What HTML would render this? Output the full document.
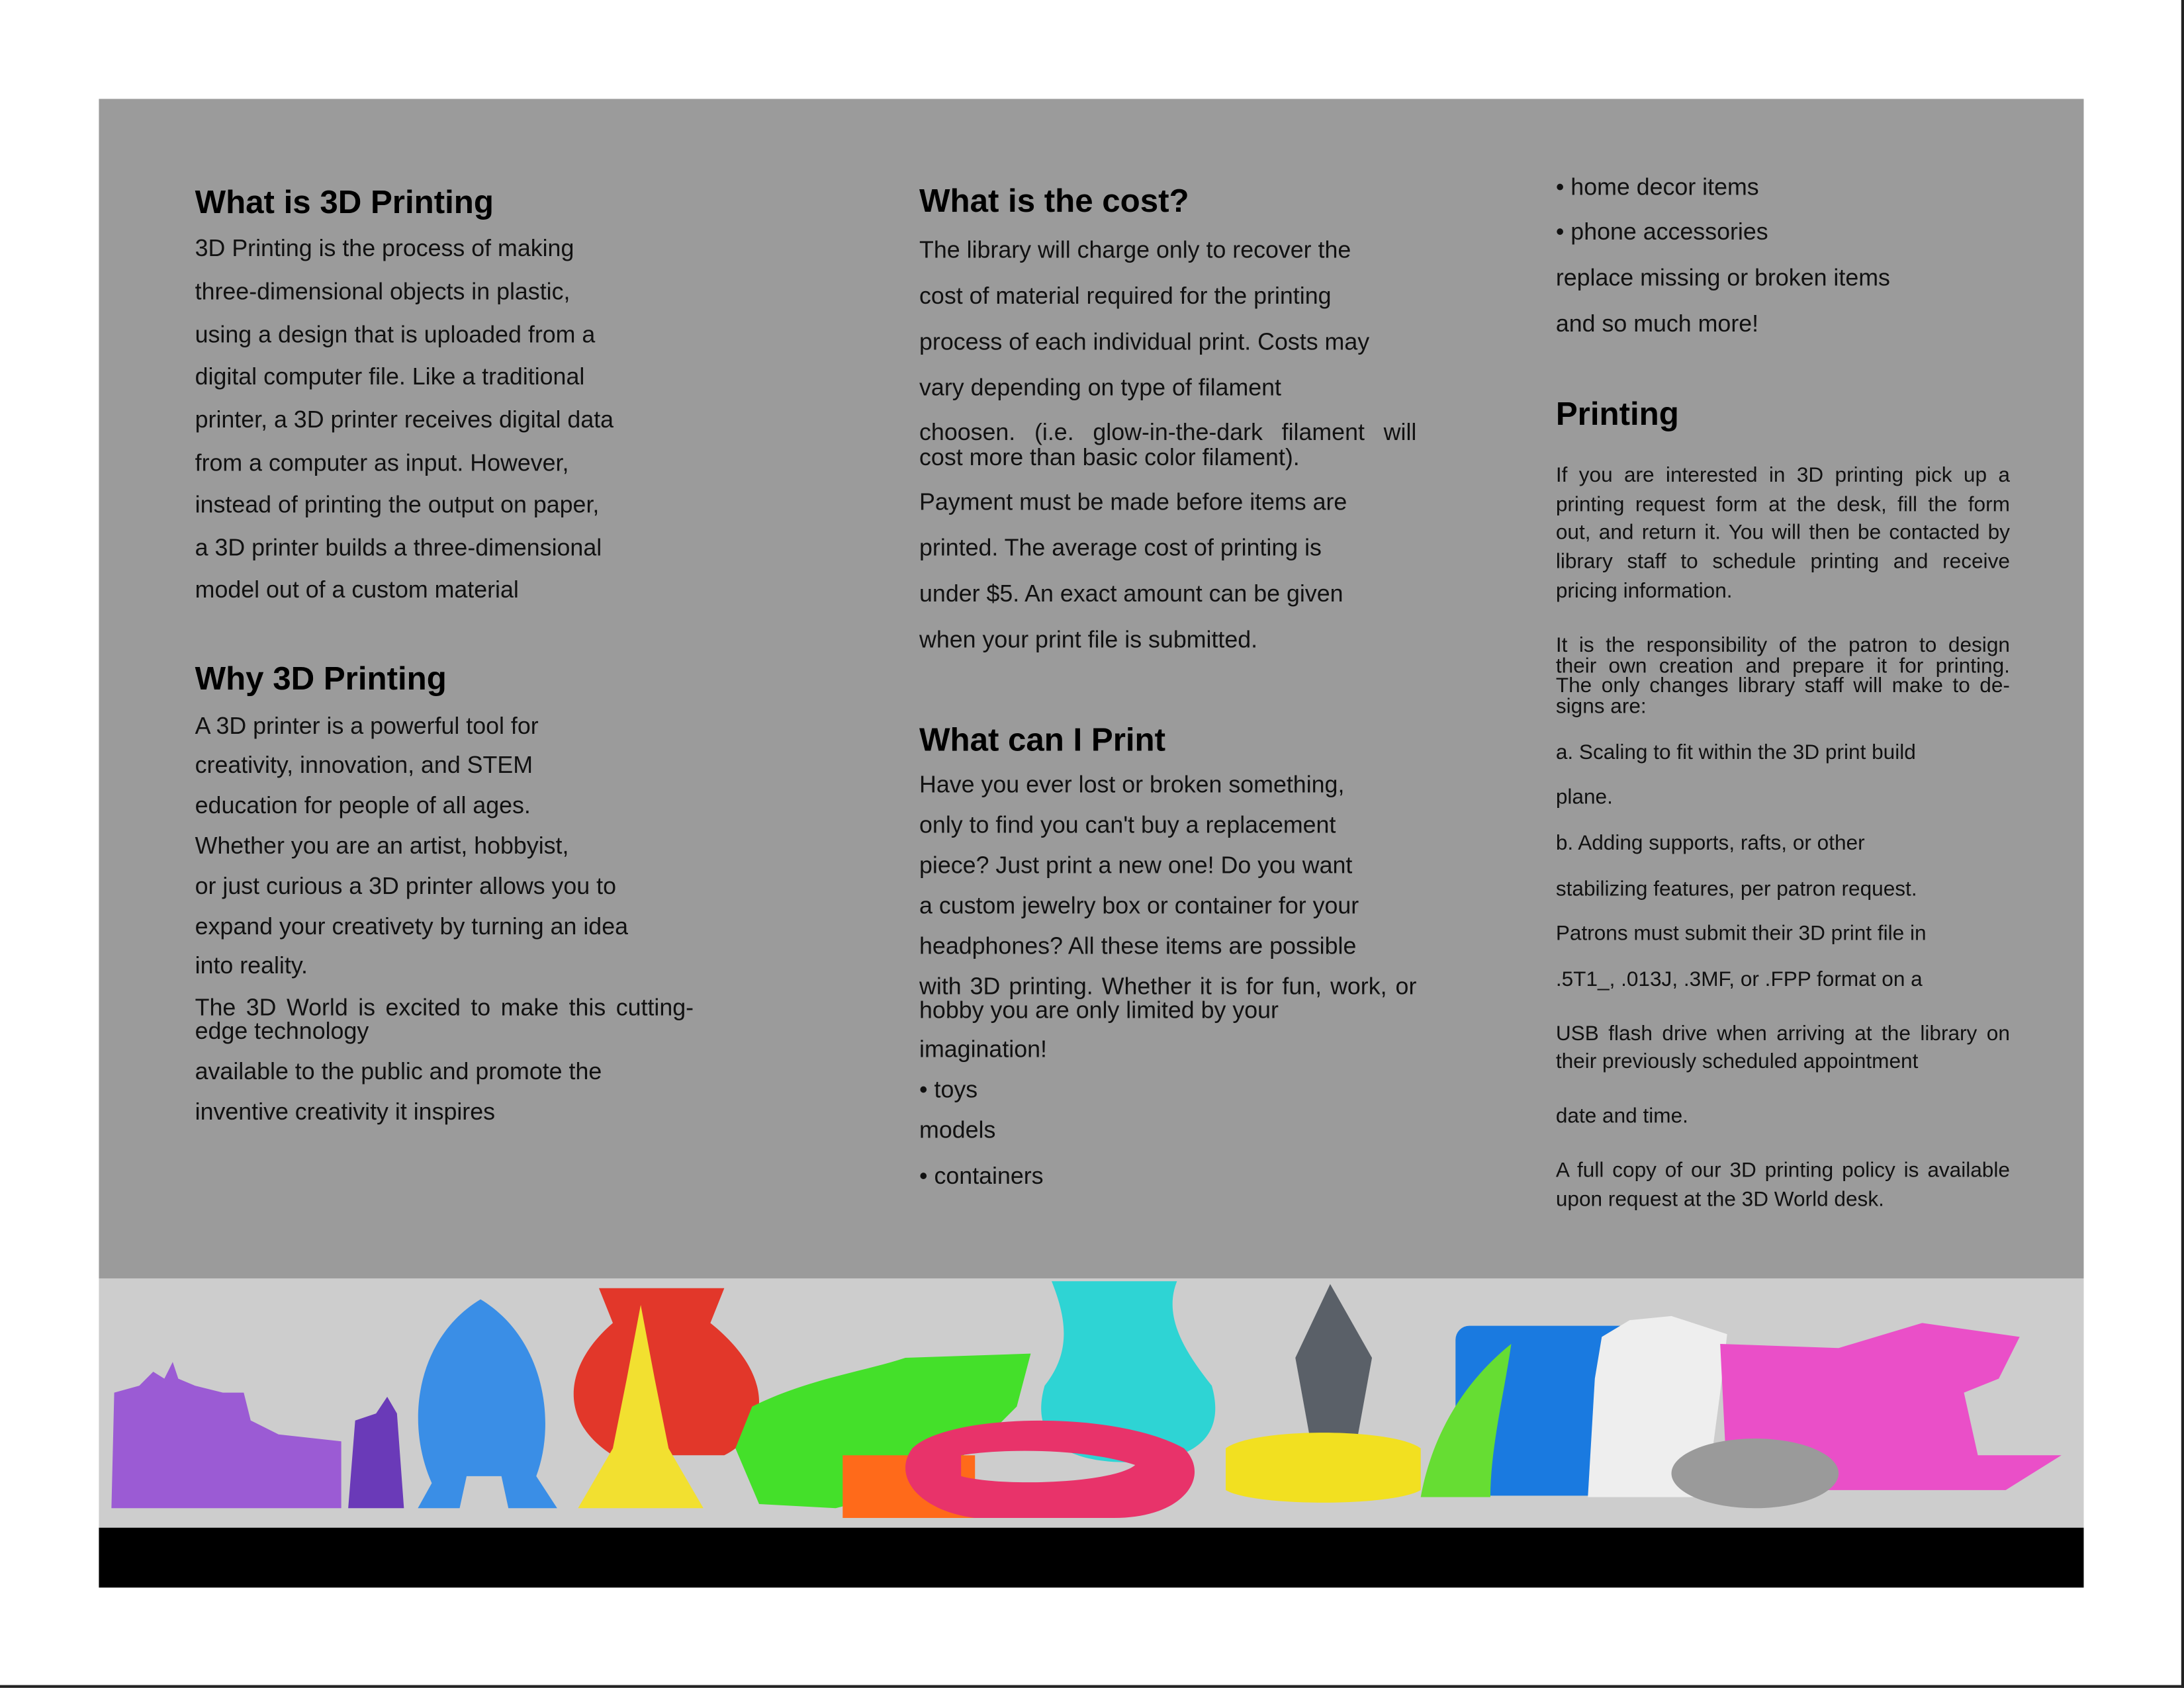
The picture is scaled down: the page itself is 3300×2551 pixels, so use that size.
<!DOCTYPE html>
<html><head><meta charset="utf-8"><style>
html,body{margin:0;padding:0;background:#fff;}
body{width:3300px;height:2550px;overflow:hidden;position:relative;}
#s{position:absolute;left:0;top:0;width:1568px;height:1212px;transform:scale(2.1046);transform-origin:0 0;font-family:"Liberation Sans","DejaVu Sans",sans-serif;color:#111;}
.p{position:absolute;background:#9b9b9b;left:71px;top:71px;width:1425px;height:847px;}
.strip{position:absolute;left:71px;top:918px;width:1425px;height:179px;background:#cdcdcd;overflow:hidden;}
.blk{position:absolute;left:71px;top:1097px;width:1425px;height:43px;background:#000;}
.rb{position:absolute;left:1566px;top:0;width:2px;height:1212px;background:#222;}
.bb{position:absolute;left:0;top:1210px;width:1568px;height:2px;background:#222;}
.t{position:absolute;font-size:17px;line-height:22px;white-space:nowrap;margin-top:1px;}
.h{position:absolute;font-size:23.4px;font-weight:bold;line-height:26px;white-space:nowrap;color:#000;margin-top:1px;}
.s{position:absolute;font-size:15px;line-height:16px;white-space:nowrap;margin-top:1px;}
.j{text-align:justify;text-align-last:justify;white-space:normal;}
</style></head><body><div id="s">
<div class="p"></div>
<div class="strip">
<svg width="1425" height="179" viewBox="71 918 1425 179" xmlns="http://www.w3.org/2000/svg">
<path d="M80 1083 L82 1000 L100 995 L110 985 L118 990 L124 978 L128 990 L140 995 L160 1000 L175 1000 L180 1020 L200 1030 L245 1035 L245 1083 Z" fill="#9b5bd4"/>
<path d="M250 1083 L255 1020 L270 1015 L278 1003 L285 1015 L290 1083 Z" fill="#6a3ab8"/>
<path d="M345 933 C300 960 290 1020 310 1065 L300 1083 L330 1083 L335 1060 L360 1060 L365 1083 L400 1083 L385 1060 C400 1020 390 960 345 933 Z" fill="#3a8ee6"/>
<path d="M430 925 L520 925 L510 950 C560 990 550 1030 520 1045 L440 1045 C400 1020 405 980 440 950 Z" fill="#e2372a"/>
<path d="M460 937 L450 990 L440 1040 L415 1083 L505 1083 L480 1040 L470 990 Z" fill="#f2e030"/>
<path d="M540 1010 C580 990 620 985 650 975 L740 972 L730 1010 L700 1040 L650 1070 L600 1083 L545 1080 L528 1040 Z" fill="#44e02a"/>
<path d="M755 920 L845 920 C835 945 850 970 870 995 C880 1030 860 1050 810 1050 C760 1050 740 1030 750 995 C770 970 765 945 755 920 Z" fill="#2ed4d4"/>
<rect x="605" y="1045" width="95" height="45" fill="#ff6a1a"/>
<path d="M655 1040 C680 1015 800 1012 850 1040 C870 1060 850 1090 800 1090 L700 1090 C660 1085 640 1060 655 1040 Z M690 1045 C720 1040 780 1040 815 1052 C800 1065 720 1068 690 1060 Z" fill="#e8336a" fill-rule="evenodd"/>
<path d="M955 922 L930 975 L940 1030 L975 1030 L985 975 Z" fill="#5a6068"/>
<path d="M880 1040 C900 1025 1000 1025 1020 1040 L1020 1070 C1000 1082 900 1082 880 1070 Z" fill="#f2e020"/>
<rect x="1045" y="952" width="160" height="122" rx="10" fill="#1a7ae0"/>
<path d="M1020 1075 C1030 1020 1060 985 1085 965 C1080 1000 1070 1040 1070 1075 Z" fill="#66dd33"/>
<path d="M1140 1075 L1145 990 L1150 960 L1170 948 L1200 945 L1240 958 L1235 1000 L1225 1075 Z" fill="#eeeeee"/>
<path d="M1235 965 L1320 968 L1380 950 L1450 960 L1435 990 L1410 1000 L1420 1045 L1480 1045 L1440 1070 L1300 1070 L1240 1065 Z" fill="#ea4fc8"/>
<ellipse cx="1260" cy="1058" rx="60" ry="25" fill="#9a9a9a"/>
</svg>
</div>
<div class="blk"></div>
<div class="rb"></div><div class="bb"></div>

<div class="h" style="left:140px;top:131px">What is 3D Printing</div>
<div class="t" style="left:140px;top:167px">3D Printing is the process of making</div>
<div class="t" style="left:140px;top:198px">three-dimensional objects in plastic,</div>
<div class="t" style="left:140px;top:229px">using a design that is uploaded from a</div>
<div class="t" style="left:140px;top:259px">digital computer file. Like a traditional</div>
<div class="t" style="left:140px;top:290px">printer, a 3D printer receives digital data</div>
<div class="t" style="left:140px;top:321px">from a computer as input. However,</div>
<div class="t" style="left:140px;top:351px">instead of printing the output on paper,</div>
<div class="t" style="left:140px;top:382px">a 3D printer builds a three-dimensional</div>
<div class="t" style="left:140px;top:412px">model out of a custom material</div>

<div class="h" style="left:140px;top:473px">Why 3D Printing</div>
<div class="t" style="left:140px;top:510px">A 3D printer is a powerful tool for</div>
<div class="t" style="left:140px;top:538px">creativity, innovation, and STEM</div>
<div class="t" style="left:140px;top:567px">education for people of all ages.</div>
<div class="t" style="left:140px;top:596px">Whether you are an artist, hobbyist,</div>
<div class="t" style="left:140px;top:625px">or just curious a 3D printer allows you to</div>
<div class="t" style="left:140px;top:654px">expand your creativety by turning an idea</div>
<div class="t" style="left:140px;top:682px">into reality.</div>
<div class="t j" style="left:140px;top:712px;width:358px">The 3D World is excited to make this cutting-</div>
<div class="t" style="left:140px;top:729px">edge technology</div>
<div class="t" style="left:140px;top:758px">available to the public and promote the</div>
<div class="t" style="left:140px;top:787px">inventive creativity it inspires</div>

<div class="h" style="left:660px;top:130px">What is the cost?</div>
<div class="t" style="left:660px;top:168px">The library will charge only to recover the</div>
<div class="t" style="left:660px;top:201px">cost of material required for the printing</div>
<div class="t" style="left:660px;top:234px">process of each individual print. Costs may</div>
<div class="t" style="left:660px;top:267px">vary depending on type of filament</div>
<div class="t j" style="left:660px;top:299px;width:357px">choosen. (i.e. glow-in-the-dark filament will</div>
<div class="t" style="left:660px;top:317px">cost more than basic color filament).</div>
<div class="t" style="left:660px;top:349px">Payment must be made before items are</div>
<div class="t" style="left:660px;top:382px">printed. The average cost of printing is</div>
<div class="t" style="left:660px;top:415px">under $5. An exact amount can be given</div>
<div class="t" style="left:660px;top:448px">when your print file is submitted.</div>

<div class="h" style="left:660px;top:517px">What can I Print</div>
<div class="t" style="left:660px;top:552px">Have you ever lost or broken something,</div>
<div class="t" style="left:660px;top:581px">only to find you can't buy a replacement</div>
<div class="t" style="left:660px;top:610px">piece? Just print a new one! Do you want</div>
<div class="t" style="left:660px;top:639px">a custom jewelry box or container for your</div>
<div class="t" style="left:660px;top:668px">headphones? All these items are possible</div>
<div class="t j" style="left:660px;top:697px;width:357px">with 3D printing. Whether it is for fun, work, or</div>
<div class="t" style="left:660px;top:714px">hobby you are only limited by your</div>
<div class="t" style="left:660px;top:742px">imagination!</div>
<div class="t" style="left:660px;top:771px">• toys</div>
<div class="t" style="left:660px;top:800px">models</div>
<div class="t" style="left:660px;top:833px">• containers</div>

<div class="t" style="left:1117px;top:123px">• home decor items</div>
<div class="t" style="left:1117px;top:155px">• phone accessories</div>
<div class="t" style="left:1117px;top:188px">replace missing or broken items</div>
<div class="t" style="left:1117px;top:221px">and so much more!</div>

<div class="h" style="left:1117px;top:283px">Printing</div>
<div class="s j" style="left:1117px;top:333px;width:326px">If you are interested in 3D printing pick up a</div>
<div class="s j" style="left:1117px;top:354px;width:326px">printing request form at the desk, fill the form</div>
<div class="s j" style="left:1117px;top:374px;width:326px">out, and return it. You will then be contacted by</div>
<div class="s j" style="left:1117px;top:395px;width:326px">library staff to schedule printing and receive</div>
<div class="s" style="left:1117px;top:416px">pricing information.</div>
<div class="s j" style="left:1117px;top:455px;width:326px">It is the responsibility of the patron to design</div>
<div class="s j" style="left:1117px;top:470px;width:326px">their own creation and prepare it for printing.</div>
<div class="s j" style="left:1117px;top:484px;width:326px">The only changes library staff will make to de-</div>
<div class="s" style="left:1117px;top:499px">signs are:</div>
<div class="s" style="left:1117px;top:532px">a. Scaling to fit within the 3D print build</div>
<div class="s" style="left:1117px;top:564px">plane.</div>
<div class="s" style="left:1117px;top:597px">b. Adding supports, rafts, or other</div>
<div class="s" style="left:1117px;top:630px">stabilizing features, per patron request.</div>
<div class="s" style="left:1117px;top:662px">Patrons must submit their 3D print file in</div>
<div class="s" style="left:1117px;top:695px">.5T1_, .013J, .3MF, or .FPP format on a</div>
<div class="s j" style="left:1117px;top:734px;width:326px">USB flash drive when arriving at the library on</div>
<div class="s" style="left:1117px;top:754px">their previously scheduled appointment</div>
<div class="s" style="left:1117px;top:793px">date and time.</div>
<div class="s j" style="left:1117px;top:832px;width:326px">A full copy of our 3D printing policy is available</div>
<div class="s" style="left:1117px;top:853px">upon request at the 3D World desk.</div>
</div></body></html>
